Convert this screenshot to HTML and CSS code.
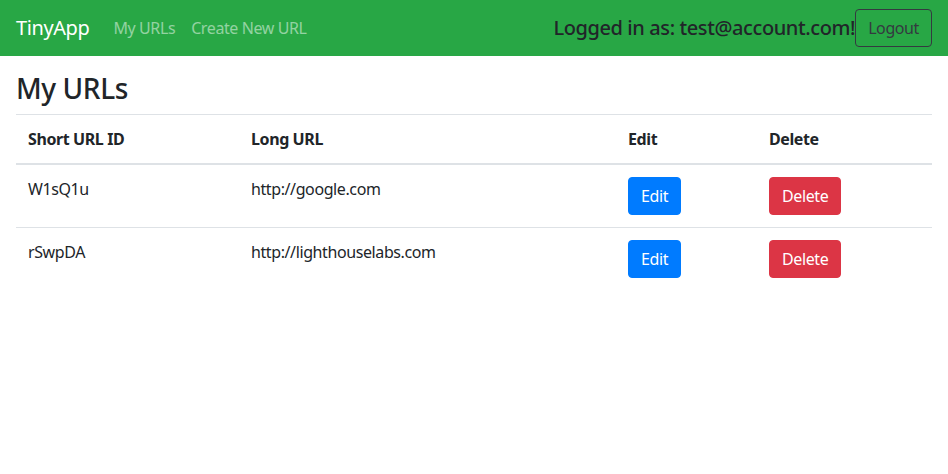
FILE: index.html
```html
<!DOCTYPE html>
<html lang="en">
<head>
<meta charset="utf-8">
<title>TinyApp</title>
<link rel="stylesheet" href="styles.css">
</head>
<body>
<nav class="navbar">
  <a class="brand" href="#">TinyApp</a>
  <div class="nav-links">
    <a class="nav-link" href="#">My URLs</a>
    <a class="nav-link" href="#">Create New URL</a>
  </div>
  <div class="nav-right">
    <span class="nav-text">Logged in as: test@account.com!</span>
    <button class="btn btn-outline-dark" type="button">Logout</button>
  </div>
</nav>
<main class="container">
  <h3 class="title">My URLs</h3>
  <table class="table">
    <thead>
      <tr>
        <th class="c1">Short URL ID</th>
        <th class="c2">Long URL</th>
        <th class="c3">Edit</th>
        <th class="c4">Delete</th>
      </tr>
    </thead>
    <tbody>
      <tr>
        <td>W1sQ1u</td>
        <td>http://google.com</td>
        <td><button class="btn btn-primary" type="button">Edit</button></td>
        <td><button class="btn btn-danger" type="button">Delete</button></td>
      </tr>
      <tr>
        <td>rSwpDA</td>
        <td>http://lighthouselabs.com</td>
        <td><button class="btn btn-primary" type="button">Edit</button></td>
        <td><button class="btn btn-danger" type="button">Delete</button></td>
      </tr>
    </tbody>
  </table>
</main>
</body>
</html>
```

FILE: styles.css
```css
* { box-sizing: border-box; }
body {
  margin: 0;
  font-family: "Noto Sans", "Open Sans", sans-serif;
  font-size: 16px;
  line-height: 1.5;
  letter-spacing: -0.025em;
  color: #212529;
  background: #fff;
}
.navbar {
  display: flex;
  align-items: center;
  height: 56px;
  padding: 8px 16px;
  background: #28a745;
}
.brand {
  font-size: 20px;
  line-height: 30px;
  color: #fff;
  text-decoration: none;
  margin-right: 16px;
}
.nav-links { display: flex; flex: 1; }
.nav-link {
  padding: 8px;
  color: rgba(255, 255, 255, 0.5);
  text-decoration: none;
}
.nav-right { display: flex; align-items: center; }
.nav-text {
  font-size: 20px;
  font-weight: 500;
  color: #212529;
}
.btn {
  display: inline-block;
  font-family: inherit;
  font-size: 16px;
  line-height: 24px;
  letter-spacing: inherit;
  padding: 6px 12px;
  border: 1px solid transparent;
  border-radius: 4px;
  background: transparent;
  cursor: pointer;
}
.btn-outline-dark { color: #343a40; border-color: #343a40; }
.btn-primary { color: #fff; background: #007bff; border-color: #007bff; }
.btn-danger { color: #fff; background: #dc3545; border-color: #dc3545; }
.container { padding: 16px 16px 0; }
.title {
  margin: 0 0 8px;
  font-size: 28px;
  font-weight: 500;
  line-height: 1.2;
}
.table {
  width: 100%;
  border-collapse: collapse;
  table-layout: fixed;
}
.table th, .table td {
  padding: 12px;
  text-align: left;
  vertical-align: top;
  border-top: 1px solid #dee2e6;
}
.table thead th {
  border-bottom: 2px solid #dee2e6;
  font-weight: 700;
}
.c1 { width: 223px; }
.c2 { width: 377px; }
.c3 { width: 141px; }
```
